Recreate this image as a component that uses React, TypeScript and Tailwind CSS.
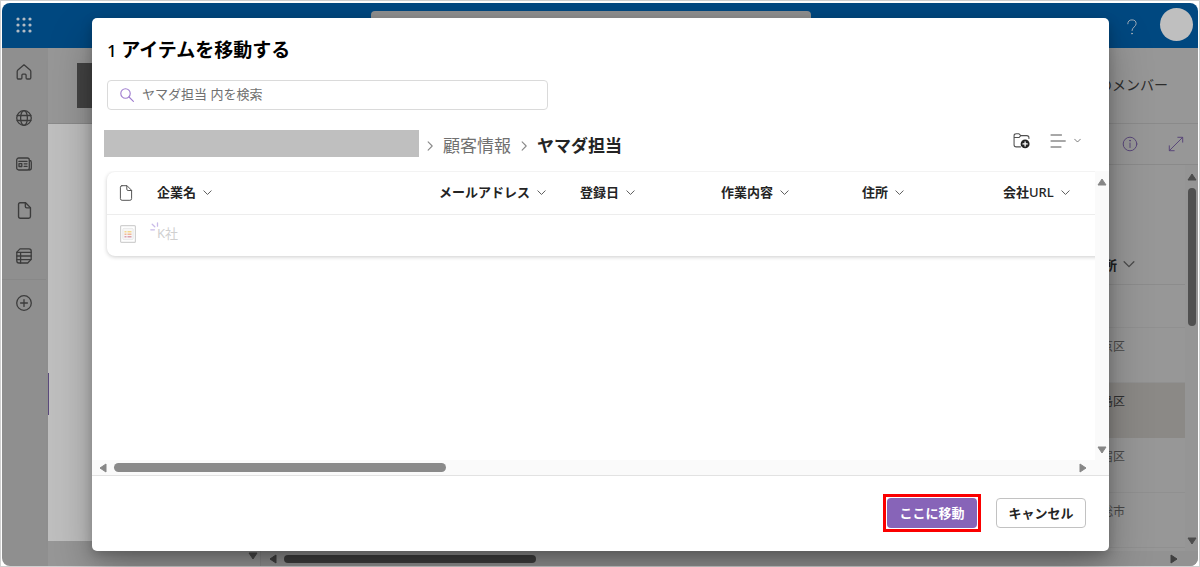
import type { ReactNode } from "react";

const columns = ["企業名", "メールアドレス", "登録日", "作業内容", "住所", "会社"];

const areas = [
  { name: "京区", selected: false },
  { name: "島区", selected: true },
  { name: "宿区", selected: false },
  { name: "総市", selected: false },
];

const Icon = ({ children, className }: { children: ReactNode; className: string }) => (
  <svg
    viewBox="0 0 16 16"
    fill="none"
    stroke="currentColor"
    strokeLinecap="round"
    strokeLinejoin="round"
    className={className}
    aria-hidden="true"
  >
    {children}
  </svg>
);

const Chevron = ({ className }: { className: string }) => (
  <Icon className={className}>
    <path d="M1.5 5L8 11.5L14.5 5" strokeWidth="1.7" />
  </Icon>
);

// Rounded triangle used at the ends of every scrollbar
const Arrow = ({ className }: { className: string }) => (
  <svg viewBox="0 0 10 8" className={className} aria-hidden="true">
    <path
      d="M5 1L9 7H1Z"
      fill="currentColor"
      stroke="currentColor"
      strokeWidth="1"
      strokeLinejoin="round"
    />
  </svg>
);

const DocumentIcon = ({ className }: { className: string }) => (
  <Icon className={className}>
    <path d="M3.9 0.7H9L13.6 5.3V13.6Q13.6 15.3 11.9 15.3H4.1Q2.4 15.3 2.4 13.6V2.2Q2.4 0.7 3.9 0.7Z" />
    <path d="M8.8 0.9V4.2Q8.8 5.5 10.1 5.5H13.4" />
  </Icon>
);

const railItems = [
  {
    label: "ホーム",
    icon: (
      <Icon className="size-4 stroke-[1.3]">
        <path d="M8 0.8L14.1 6Q14.8 6.6 14.8 7.6V13.7Q14.8 15 13.5 15H11.2Q10.1 15 10.1 13.9V11.2Q10.1 10.2 9.1 10.2H6.9Q5.9 10.2 5.9 11.2V13.9Q5.9 15 4.8 15H2.5Q1.2 15 1.2 13.7V7.6Q1.2 6.6 1.9 6Z" />
      </Icon>
    ),
  },
  {
    label: "サイト",
    icon: (
      <Icon className="size-4 stroke-[1.3]">
        <circle cx="8" cy="8" r="7.3" />
        <ellipse cx="8" cy="8" rx="3.4" ry="7.3" />
        <path d="M1.2 5.5H14.8M1.2 10.5H14.8" />
      </Icon>
    ),
  },
  {
    label: "ニュース",
    icon: (
      <Icon className="size-4 stroke-[1.3]">
        <rect x="0.7" y="2" width="12.6" height="12" rx="2" />
        <path d="M13.5 4.5Q15.3 4.5 15.3 6.3V12Q15.3 14 13 14" />
        <rect x="3" y="7.7" width="2.8" height="2.8" />
        <path d="M2.9 5.4H11M8.2 7.8H11M8.2 10.4H11" />
      </Icon>
    ),
  },
  { label: "ファイル", icon: <DocumentIcon className="size-[17px] stroke-[1.3]" /> },
  {
    label: "リスト",
    icon: (
      <Icon className="size-4 stroke-[1.3]">
        <path d="M4 0.9H13Q15.2 0.9 15.2 3.1V11.4L11.7 15H3Q0.8 15 0.8 12.8V4.1Z" />
        <path d="M0.9 4.4H15.1M0.9 8H15.1M0.9 11.6H14.8M4.6 4.4V15" />
      </Icon>
    ),
  },
  {
    label: "作成",
    icon: (
      <Icon className="size-4 stroke-[1.3]">
        <circle cx="8" cy="8" r="7.3" />
        <path d="M8 4.6V11.4M4.6 8H11.4" />
      </Icon>
    ),
  },
];

const Background = () => (
  <>
    <header className="flex h-[45px] items-center bg-[#004880] pr-[5px] pb-[2px] pl-[14px]">
      <button type="button" aria-label="アプリ起動ツール" className="text-[#b4bcc4]">
        <svg viewBox="0 0 16 16" className="size-4" fill="currentColor">
          {[2, 8, 14].map((y) => [2, 8, 14].map((x) => <circle key={`${x}-${y}`} cx={x} cy={y} r="1.6" />))}
        </svg>
      </button>
      <div className="mt-2 ml-[339px] h-7 w-[440px] self-start rounded-sm bg-[#909090]" />
      <button type="button" aria-label="ヘルプ" className="mt-1 mr-5 ml-auto text-[#a0acb8]">
        <Icon className="size-4">
          <path d="M3.8 4.8Q3.8 0.9 8 0.9Q12.1 0.9 12.1 4.6Q12.1 6.3 10.2 7.9Q8 9.7 8 11.5" />
          <circle cx="8" cy="14.6" r="0.5" fill="currentColor" />
        </Icon>
      </button>
      <div className="size-[33px] rounded-full bg-[#bfbfbf]" />
    </header>

    <div className="flex flex-1">
      <nav className="w-[46px] bg-[#8f8f8f] pt-px pr-[2px] text-[#3c3c3c]">
        <ul>
          {railItems.map((item, i) => (
            <li key={item.label} className={i === 5 ? "border-t border-[#888888]" : ""}>
              <a href="#" aria-label={item.label} className="flex h-[46px] items-center justify-center">
                {item.icon}
              </a>
            </li>
          ))}
        </ul>
      </nav>

      <div className="flex min-w-0 flex-1 flex-col bg-[#979797]">
        <div className="flex h-[76px] items-center border-b border-[#8a8a8a] pr-[30px]">
          <div className="ml-[29px] size-[45px] bg-[#434343]" />
          <span className="ml-auto pb-[2px] text-sm text-[#2c2c2c]">のメンバー</span>
        </div>

        <div className="flex flex-1">
          <div className="flex w-[213px] flex-col border-r border-[#8a8a8a]">
            <div className="flex flex-1 items-center bg-[#bfbfbf]">
              <div className="mt-[122px] h-[42px] w-px bg-[#5b4a7c]" />
            </div>
            <div className="flex h-[25px] items-center justify-end pr-[2px] pt-1 text-[#4a4a4a]">
              <Arrow className="h-2 w-[10px] rotate-180" />
            </div>
          </div>

          <div className="flex min-w-0 flex-1 flex-col">
            <div className="flex h-[41px] items-center justify-end gap-[30px] border-b border-[#8a8a8a] pr-[14px] text-[#5a487a]">
              <button type="button" aria-label="詳細">
                <Icon className="size-4">
                  <circle cx="8" cy="8" r="6.8" />
                  <path d="M8 7V11.5" />
                  <circle cx="8" cy="4.7" r="0.4" fill="currentColor" />
                </Icon>
              </button>
              <button type="button" aria-label="展開">
                <Icon className="size-4">
                  <path d="M1.3 14.7L14.7 1.3M9.8 1.3H14.7V6.2M1.3 9.8V14.7H6.2" />
                </Icon>
              </button>
            </div>

            <div className="flex flex-1">
              <div className="flex-1 text-xs text-[#494949]">
                <div className="flex h-[120px] items-end justify-end gap-[6px] border-b border-[#8c8c8c] pr-[50px] pb-[10px] text-[13px] font-bold text-[#202020]">
                  住所
                  <Chevron className="mb-[4px] size-3 text-[#4a4a4a]" />
                </div>
                <div className="h-[43px] border-b border-[#909090]" />
                {areas.map((area) => (
                  <div
                    key={area.name}
                    className={
                      area.selected
                        ? "h-[55px] bg-[#8b8986] pt-[11px] pr-[60px] text-right text-[#303030]"
                        : "h-[55px] border-b border-[#909090] pt-[11px] pr-[60px] text-right"
                    }
                  >
                    {area.name}
                  </div>
                ))}
              </div>
              <div className="flex w-[13px] flex-col items-center bg-[#959595] pt-2 pb-[6px] text-[#4c4c4c]">
                <Arrow className="h-2 w-[10px]" />
                <div className="mt-[7px] h-[138px] w-2 rounded-full bg-[#505050]" />
                <Arrow className="mt-auto h-2 w-[10px] rotate-180" />
              </div>
            </div>

            <div className="flex h-[15px] items-center bg-[#929292] pr-[19px] pl-[7px] text-[#404040]">
              <Arrow className="h-2 w-[10px] -rotate-90" />
              <div className="ml-[6px] h-2 w-[252px] rounded-full bg-[#3f3f3f]" />
              <Arrow className="ml-auto h-2 w-[10px] rotate-90" />
            </div>
          </div>
        </div>
      </div>
    </div>
  </>
);

const ItemTable = () => (
  <table className="w-[1037px] table-fixed rounded-lg bg-white text-left text-[13px] text-[#242424] shadow-[0_1px_4px_rgba(0,0,0,0.2)]">
    <colgroup>
      <col className="w-[50px]" />
      <col className="w-[282px]" />
    </colgroup>
    <thead>
      <tr className="h-[42px] border-b border-[#ededed]">
        <th className="pl-[11px]">
          <DocumentIcon className="size-4 text-[#555555]" />
        </th>
        {columns.map((column) => (
          <th key={column} className="font-bold whitespace-nowrap">
            <span className="flex items-center gap-[7px]">
              <span>
                {column}
                {column === "会社" && <span className="font-medium">URL</span>}
              </span>
              <Chevron className="size-[9px] text-[#555555]" />
            </span>
          </th>
        ))}
      </tr>
    </thead>
    <tbody>
      <tr className="h-[42px] text-[#d0d0d0]">
        <td className="pb-[2px] pl-[13px]">
          <svg viewBox="0 0 16 18" className="h-[18px] w-4" fill="none">
            <rect x="0.6" y="0.6" width="14.8" height="16.8" rx="1" stroke="#d0d0d0" strokeWidth="1.2" />
            <rect x="2.8" y="3.4" width="10.4" height="11.2" rx="1" fill="#f6f6f6" stroke="#e4e4e4" strokeWidth="0.8" />
            <path d="M4.5 6.7H6.5M7.5 6.7H11.5" stroke="#f5d88c" strokeWidth="1.6" />
            <path d="M4.5 9.2H6.5M7.5 9.2H11.5" stroke="#f2b896" strokeWidth="1.6" />
            <path d="M4.5 11.7H6.5M7.5 11.7H11.5" stroke="#dba0ae" strokeWidth="1.6" />
          </svg>
        </td>
        <td className="pb-1">
          <span className="relative">
            {/* sparkle that marks a newly added item */}
            <svg
              viewBox="0 0 9 9"
              className="absolute -top-[2px] -left-[7px] size-[9px]"
              stroke="#c9bbe8"
              strokeWidth="1.3"
              strokeLinecap="round"
              aria-hidden="true"
            >
              <path d="M7.5 0.8V4.2M2.2 2.3L4.8 4.7M0.8 7.8H4.4" />
            </svg>
            K社
          </span>
        </td>
        <td />
        <td />
        <td />
        <td />
        <td />
      </tr>
    </tbody>
  </table>
);

const MoveDialog = () => (
  <div
    role="dialog"
    aria-labelledby="dialog-title"
    className="flex flex-1 flex-col overflow-hidden rounded-[5px] bg-white shadow-[0_20px_44px_rgba(0,0,0,0.28),0_4px_12px_rgba(0,0,0,0.22)]"
  >
    <div className="pt-5 pr-7 pl-[15px]">
      <h1 id="dialog-title" className="h-6 text-[19px] leading-6 font-bold text-black">
        <span className="text-[17px] leading-6 font-medium">1 </span>アイテムを移動する
      </h1>
      <label className="mt-[18px] flex h-[30px] w-[441px] items-center gap-2 rounded-sm border border-[#dadada] pr-2 pl-3">
        <Icon className="size-[14px] text-[#a17fd0]">
          <circle cx="6.3" cy="6.3" r="5.4" strokeWidth="1.3" />
          <path d="M10.3 10.3L15.3 15.3" strokeWidth="1.3" />
        </Icon>
        <input
          type="text"
          aria-label="検索"
          placeholder="ヤマダ担当 内を検索"
          className="flex-1 text-[13px] placeholder:text-[#707070] focus:outline-none"
        />
      </label>
      <div className="mt-5 -ml-[3px] flex h-8 text-[17px] text-[#242424]">
        <div className="h-[27px] w-[315px] bg-[#bfbfbf]" />
        <nav className="ml-[6px] flex items-center gap-2">
          <Chevron className="size-[10px] -rotate-90 text-[#888888]" />
          <a href="#" className="text-[#707070]">
            顧客情報
          </a>
          <Chevron className="size-[10px] -rotate-90 text-[#888888]" />
          <span className="font-bold">ヤマダ担当</span>
        </nav>
        <div className="ml-auto flex h-[21px] items-center gap-5 text-[#505050]">
          <button type="button" aria-label="新しいフォルダー">
            <Icon className="size-[17px]">
              <path d="M7 14H3Q1 14 1 12V3.6Q1 1.6 3 1.6H5.4L7.4 3.4H13Q15 3.4 15 5.4V6M1 5.2H5.6L7.4 3.4" />
              <circle cx="11.4" cy="11.2" r="4.2" fill="#242424" stroke="none" />
              <path d="M11.4 9.2V13.2M9.4 11.2H13.4" stroke="white" strokeWidth="1.2" />
            </Icon>
          </button>
          <button type="button" aria-label="表示オプション" className="flex items-center gap-2">
            <Icon className="size-4">
              <path d="M1 2H11.5M1 8H15.3M1 14H11" />
            </Icon>
            <Chevron className="size-[7px] stroke-2" />
          </button>
        </div>
      </div>
    </div>

    <div className="mt-[9px] flex flex-1">
      <div className="min-w-0 flex-1 overflow-hidden pt-px pl-[15px]">
        <ItemTable />
      </div>
      <div className="flex w-[14px] flex-col items-center justify-between bg-[#fafafa] pt-[7px] pb-[6px] text-[#868686]">
        <Arrow className="h-2 w-[10px]" />
        <Arrow className="h-2 w-[10px] rotate-180" />
      </div>
    </div>
    <div className="flex h-[15px] items-center bg-[#fafafa] pr-[21px] pl-[6px] text-[#868686]">
      <Arrow className="h-2 w-[10px] -rotate-90" />
      <div className="ml-[6px] h-[9px] w-[332px] rounded-full bg-[#8a8a8a]" />
      <Arrow className="ml-auto h-2 w-[10px] rotate-90" />
    </div>

    <footer className="flex items-center justify-end gap-[15px] border-t border-[#e2e2e2] pt-[18px] pr-[23px] pb-[19px] text-[13px] font-bold">
      <div className="border-[3px] border-[#fb0000] p-px">
        <button type="button" className="h-[30px] w-[90px] rounded-sm bg-[#8764b8] pt-[2px] text-white">
          ここに移動
        </button>
      </div>
      <button
        type="button"
        className="h-[30px] w-[90px] rounded-sm border border-[#c2c2c2] bg-white pt-[2px] text-[#242424]"
      >
        キャンセル
      </button>
    </footer>
  </div>
);

const App = () => {
  return (
    <div className="relative flex min-h-screen flex-col bg-white pt-[3px] pr-[2px] pb-px pl-[2px] font-['Noto_Sans','Noto_Sans_CJK_JP',sans-serif] shadow-[inset_0_0_0_1px_#d0d0d0]">
      <div className="flex flex-1 flex-col overflow-hidden rounded-lg">
        <Background />
      </div>
      <div className="absolute inset-0 flex overflow-hidden pt-[18px] pr-[91px] pb-4 pl-[92px]">
        <MoveDialog />
      </div>
    </div>
  );
};

export default App;
